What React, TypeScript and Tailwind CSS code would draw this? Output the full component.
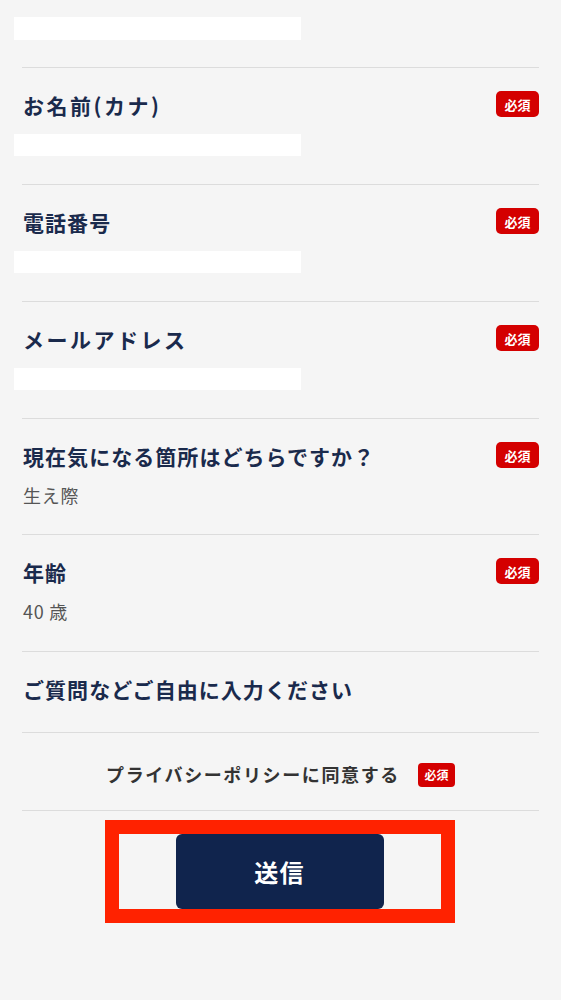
import React from "react";

const font = { fontFamily: '"Noto Sans CJK JP", "Noto Sans", sans-serif' };

function Badge() {
  return (
    <span className="inline-flex h-[26px] w-[43px] items-center justify-center rounded-[5px] bg-[#d40000] text-[13px] font-bold leading-none text-white">
      必須
    </span>
  );
}

function TitleRow({
  title,
  required = true,
  wide = false,
}: {
  title: string;
  required?: boolean;
  wide?: boolean;
}) {
  return (
    <div className="flex h-[26px] items-center justify-between">
      <span
        className={
          wide
            ? "pl-[1px] pt-[3px] text-[21px] font-bold tracking-[0.12em] text-[#1a2a4c]"
            : "pl-[1px] pt-[3px] text-[21px] font-bold tracking-[0.05em] text-[#1a2a4c]"
        }
      >
        {title}
      </span>
      {required && <Badge />}
    </div>
  );
}

function InputSection({ title, wide = false }: { title: string; wide?: boolean }) {
  return (
    <div className="border-t border-[#dcdcdc] pb-[28px] pt-[23px]">
      <TitleRow title={title} wide={wide} />
      <div className="-ml-[8px] mt-[17px] h-[22px] w-[287px] bg-white" />
    </div>
  );
}

function ValueSection({ title, value, tall = false }: { title: string; value: string; tall?: boolean }) {
  return (
    <div className={tall ? "border-t border-[#dcdcdc] pb-[27px] pt-[23px]" : "border-t border-[#dcdcdc] pb-[26px] pt-[23px]"}>
      <TitleRow title={title} />
      <div className="mt-[14px] h-[26px] pl-[1px] text-[18px] leading-[26px] tracking-[0.04em] text-[#555]">
        {value}
      </div>
    </div>
  );
}

export default function App() {
  return (
    <div className="min-h-[1000px] w-full bg-[#f5f5f5]" style={font}>
      <div className="px-[22px]">
        <div className="pb-[27px] pt-[17px]">
          <div className="-ml-[8px] h-[23px] w-[287px] bg-white" />
        </div>
        <InputSection title="お名前(カナ)" wide />
        <InputSection title="電話番号" />
        <InputSection title="メールアドレス" wide />
        <ValueSection title="現在気になる箇所はどちらですか？" value="生え際" />
        <ValueSection title="年齢" value="40 歳" tall />
        <div className="border-t border-[#dcdcdc] pb-[31px] pt-[23px]">
          <TitleRow title="ご質問などご自由に入力ください" required={false} />
        </div>
        <div className="flex items-center justify-center gap-[18px] border-t border-[#dcdcdc] pb-[22px] pt-[28px]">
          <span className="text-[18px] font-bold tracking-[0.09em] text-[#333]">プライバシーポリシーに同意する</span>
          <span className="inline-flex h-[24px] w-[37px] items-center justify-center rounded-[4px] bg-[#d40000] text-[12px] font-bold leading-none text-white">
            必須
          </span>
        </div>
        <div className="border-t border-[#dcdcdc] pt-[9px]">
          <div className="mx-auto flex h-[103px] w-[350px] -translate-x-[1px] items-end justify-center border-[14px] border-[#ff2200]">
            <button className="flex h-[75px] w-[208px] items-center justify-center rounded-[6px] bg-[#10244d] text-[24px] font-bold tracking-[0.05em] text-white">
              送信
            </button>
          </div>
        </div>
      </div>
    </div>
  );
}
